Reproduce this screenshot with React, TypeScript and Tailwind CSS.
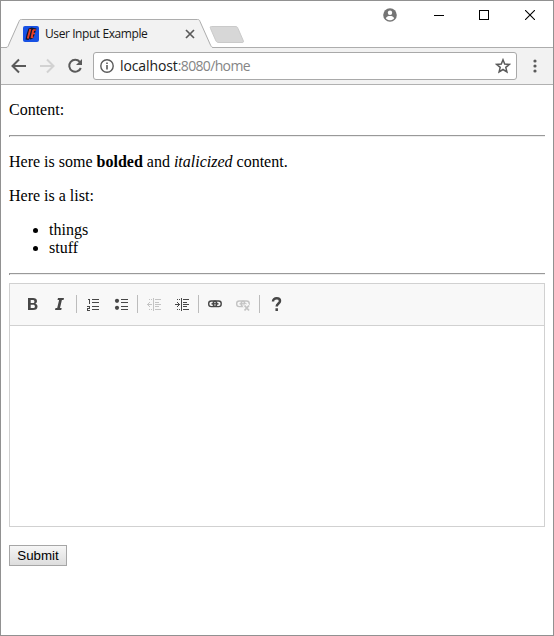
import React from "react";

function Cell({ children }: { children: React.ReactNode }) {
  return (
    <button className="flex h-7 w-7 items-center justify-center">
      <svg width="16" height="16" viewBox="0 0 16 16" fill="none" shapeRendering="crispEdges">
        {children}
      </svg>
    </button>
  );
}

function Separator() {
  return <span className="mx-[2px] h-[18px] w-px bg-[#bcbcbc]" />;
}

function IndentIcon({ color, outdent }: { color: string; outdent?: boolean }) {
  return (
    <g fill={color}>
      <path d="M7 2h1v13H7zM9 3h6v1H9zM9 6h4v1H9zM9 8h6v1H9zM9 10h4v1H9zM9 13h6v1H9zM3 3h1v1H3zM5 3h1v1H5zM3 13h1v1H3zM5 13h1v1H5z" />
      {outdent ? <path d="M1 8h5v1H1zM2 7h1v3H2zM3 6h1v1H3zM3 10h1v1H3z" /> : <path d="M1 8h5v1H1zM4 7h1v3H4zM3 6h1v1H3zM3 10h1v1H3z" />}
    </g>
  );
}

function ChainIcon({ color }: { color: string }) {
  return (
    <g stroke={color} strokeWidth="1.4" shapeRendering="auto">
      <rect x="1.700" y="5" width="8" height="5.600" rx="2.600" />
      <rect x="6.200" y="5" width="8" height="5.600" rx="2.600" />
      <path d="M4.500 7.800h7" />
    </g>
  );
}

function TitleBar() {
  return (
    <div className="relative flex h-[47px] shrink-0 border-b border-[#adadad] bg-white">
      <svg className="absolute left-0 top-[17px]" width="250" height="30" viewBox="1 18 250 30" fill="none">
        <path d="M6.500 47.500C8 47 8.500 45.500 9 44L19 21.500C19.500 20 20 19.500 21.500 19.500H197.500C199 19.500 199.500 20 200 21.500L210 44C211 46 211.500 47.500 213 47.500V49H6z" fill="#f2f2f2" />
        <path d="M1 47.500H6C8 47.500 8.500 45.500 9 44L19 21.500C19.500 20 20 19.500 21.500 19.500H197.500C199 19.500 199.500 20 200 21.500L210 44C211 46 211.500 47.500 213 47.500" stroke="#adadad" />
        <path d="M211.500 26.500H235C237 26.500 237.500 27 238 28.500L243 40C244 42 243.500 42.500 242 42.500H219C217 42.500 216.500 42 215.500 40L210.500 28.500C210 27 210 26.500 211.500 26.500z" fill="#d7d7d7" stroke="#cacaca" />
      </svg>
      <div className="relative mt-[18px] flex h-[29px] w-[212px] items-center pl-[22px]">
        <svg width="16" height="16" viewBox="0 0 16 16" fill="none">
          <rect width="16" height="16" rx="2" fill="#1751e4" />
          <path d="M5.500 2.500l3-1 5 1-1 3-1 3-1 3.500-3 1.500-1-1-1 1.500-3-.5 1-5z" fill="#14152b" />
          <path d="M7.300 3L4.800 12.500M10.300 4L8.500 12" stroke="#e8402a" strokeWidth="1.900" />
          <path d="M10 4h2.800M9 7.500h3M8 11.300h2.500" stroke="#e8402a" strokeWidth="1.500" />
        </svg>
        <span className="ml-[6px] w-[140px] whitespace-nowrap font-['Open_Sans','Noto_Sans',sans-serif] text-[12px] leading-4 tracking-[-0.42px] text-[#171717]">User Input Example</span>
        <svg width="10" height="10" viewBox="0 0 10 10" fill="none">
          <path d="M1 1l8 8M9 1L1 9" stroke="#5a5a5a" strokeWidth="1.700" />
        </svg>
      </div>
      <div className="ml-auto flex h-7 items-center gap-[35px] pr-[18px]">
        <svg className="mr-[2px]" width="14" height="14" viewBox="0 0 14 14" fill="none">
          <circle cx="7" cy="7" r="6.800" fill="#757575" />
          <circle cx="7" cy="4.700" r="2.200" fill="white" />
          <path d="M2.800 10.300C3.500 8.500 5 8 7 8s3.500.5 4.200 2.300C10 11.900 8.700 12.300 7 12.300s-3-.4-4.200-2z" fill="white" />
        </svg>
        <svg width="10" height="10" viewBox="0 0 10 10" shapeRendering="crispEdges"><path d="M0 5h10v1H0z" /></svg>
        <svg width="10" height="10" viewBox="0 0 10 10" fill="none" shapeRendering="crispEdges"><path d="M.5.500h9v9h-9z" stroke="black" /></svg>
        <svg className="ml-[1px]" width="10" height="10" viewBox="0 0 10 10" fill="none"><path d="M0 0l10 10M10 0L0 10" stroke="black" strokeWidth="1.100" /></svg>
      </div>
    </div>
  );
}

function AddressBar() {
  return (
    <div className="flex h-[37px] shrink-0 items-center border-b border-[#b1b1b1] bg-[#f2f2f2] pl-[10px]">
      <svg width="16" height="16" viewBox="0 0 16 16" fill="none" stroke="#5a5a5a" strokeWidth="2"><path d="M15 8H2M8 1.500L1.500 8 8 14.500" /></svg>
      <svg className="ml-3" width="16" height="16" viewBox="0 0 16 16" fill="none" stroke="#d2d2d2" strokeWidth="2"><path d="M1 8h13M8 1.500L14.500 8 8 14.500" /></svg>
      <svg className="ml-3" width="16" height="16" viewBox="0 0 16 16" fill="none">
        <path d="M12.800 3.800A6 6 0 1 0 13.800 10" stroke="#5a5a5a" strokeWidth="2" />
        <path d="M15 1v6H9z" fill="#5a5a5a" />
      </svg>
      <div className="ml-[10px] flex h-7 w-[424px] items-center rounded-[3px] border border-[#a9a9a9] bg-white pl-[6px] pr-[5px]">
        <svg width="14" height="14" viewBox="0 0 14 14" fill="none">
          <circle cx="7" cy="7" r="6.200" stroke="#5a5a5a" strokeWidth="1.400" />
          <path d="M6.200 6h1.600v4.500H6.200zM6.200 3.500h1.600V5H6.200z" fill="#5a5a5a" />
        </svg>
        <span className="ml-[6px] font-['Open_Sans','Noto_Sans',sans-serif] text-[14px] leading-5 tracking-[-0.1px] text-[#202020]">localhost<span className="tracking-[-0.65px] text-[#858585]">:8080/home</span></span>
        <svg className="ml-auto" width="16" height="16" viewBox="0 0 16 16" fill="none"><path d="M8 1.800l1.700 4.300 4.700.3-3.600 3 1.100 4.500L8 11.500l-3.900 2.400 1.100-4.500-3.600-3 4.700-.3z" stroke="#5a5a5a" strokeWidth="1.500" /></svg>
      </div>
      <svg className="ml-4" width="4" height="14" viewBox="0 0 4 14" fill="#5a5a5a"><circle cx="2" cy="2" r="1.600" /><circle cx="2" cy="7" r="1.600" /><circle cx="2" cy="12" r="1.600" /></svg>
    </div>
  );
}

function Rule() {
  return <hr className="h-[2px] border-0 border-l border-t border-[#999] bg-[#eee]" />;
}

function Editor() {
  return (
    <div className="mt-2 flex h-[244px] flex-col border border-[#d1d1d1] bg-white">
      <div className="flex h-[42px] items-center border-b border-[#d1d1d1] bg-[#f8f8f8] pb-px pl-2">
        <Cell><path shapeRendering="auto" fillRule="evenodd" fill="#474747" d="M4 2h5c2.500 0 4 1 4 3 0 1.500-.7 2.300-1.800 2.700C12.700 8 13.500 9 13.500 10.500 13.500 13 12 14 9 14H4zM6.700 4v3H9c1 0 1.400-.5 1.400-1.500S9.900 4 8.800 4zM6.700 8.800V12H9c1.300 0 1.900-.5 1.900-1.600S10.300 8.800 9 8.800z" /></Cell>
        <Cell><path shapeRendering="auto" fill="#474747" d="M6 2h6l-.5 2H9.900L8 12h1.700l-.5 2H3l.5-2h1.700l1.900-8H5.500z" /></Cell>
        <Separator />
        <Cell><path fill="#474747" d="M7 3h7v1H7zM7 6h7v1H7zM7 10h7v1H7zM7 13h7v1H7zM3 3h2v5H4V4H3zM2 10h3v3H3v1h2v1H2v-3h2v-1H2z" /></Cell>
        <Cell><path fill="#474747" d="M8 3h7v1H8zM8 6h7v1H8zM8 10h7v1H8zM8 13h7v1H8z" /><g shapeRendering="auto" fill="#474747"><circle cx="4" cy="4.800" r="2.100" /><circle cx="4" cy="11.800" r="2.100" /></g></Cell>
        <Separator />
        <Cell><IndentIcon color="#c4c4c4" outdent /></Cell>
        <Cell><IndentIcon color="#474747" /></Cell>
        <Separator />
        <Cell><ChainIcon color="#474747" /></Cell>
        <Cell><ChainIcon color="#c4c4c4" /><path shapeRendering="auto" d="M9 9l5.500 6M14.500 9L9 15" stroke="#f8f8f8" strokeWidth="3.500" /><path shapeRendering="auto" d="M9.500 9.500l4.500 5M14 9.500l-4.500 5" stroke="#c4c4c4" strokeWidth="1.800" /></Cell>
        <Separator />
        <Cell><path shapeRendering="auto" d="M5 5.500C5 3.500 6.500 2.300 8.700 2.300S12 3.300 12 5c0 2.500-3.300 2.500-3.300 5.500M8.700 12.300V15" stroke="#474747" strokeWidth="2.500" /></Cell>
      </div>
      <div className="flex-1" contentEditable suppressContentEditableWarning />
    </div>
  );
}

export default function App() {
  return (
    <div className="flex h-[636px] w-[554px] flex-col overflow-hidden border border-[#919191] bg-white">
      <TitleBar />
      <AddressBar />
      <main className="px-2 pt-4 font-['Liberation_Serif',serif] text-[16px] leading-[18px] text-black">
        <p className="mb-4">Content:</p>
        <Rule />
        <p className="my-4">Here is some <b>bolded</b> and <i>italicized</i> content.</p>
        <p className="my-4">Here is a list:</p>
        <ul className="my-4 list-disc pl-10">
          <li>things</li>
          <li>stuff</li>
        </ul>
        <Rule />
        <Editor />
        <button className="mt-[18px] flex h-[21px] w-[58px] items-center justify-center border border-[#a6a6a6] bg-linear-to-b from-[#f6f6f6] to-[#dddddd] font-['Liberation_Sans',sans-serif] text-[13.333px] leading-[15px]">Submit</button>
      </main>
    </div>
  );
}
